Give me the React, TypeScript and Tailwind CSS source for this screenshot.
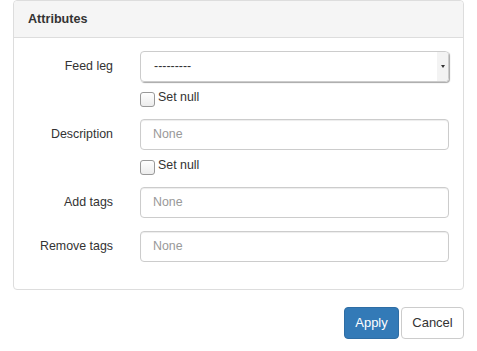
const font = { fontFamily: '"Liberation Sans", Arial, sans-serif' };

const Label = ({ text }: { text: string }) => (
    <div className="w-[85px] shrink-0 text-right text-[12.4px] text-[#333]">{text}</div>
);

const TextInput = () => (
    <div className="flex-1 h-[31px] border border-[#ccc] rounded-[4px] flex items-center px-[12px] text-[12.4px] text-[#999] shadow-[inset_0_1px_1px_rgba(0,0,0,0.075)]">
        None
    </div>
);

const SetNull = () => (
    <div className="flex items-start ml-[112px] mt-[10px]">
        <div className="w-[15px] h-[15px] border border-[#999] rounded-[3px] bg-gradient-to-b from-white to-[#ececec]" />
        <span className="text-[12.4px] text-[#333] ml-[3px] -mt-[3px] leading-[16px]">Set null</span>
    </div>
);

const App = () => {
    return (
        <div className="w-[477px] h-[351px] bg-white" style={font}>
            <div className="mx-[13px] border border-[#ddd] rounded-[4px]">
                <div className="h-[37px] bg-[#f5f5f5] border-b border-[#ddd] rounded-t-[4px] flex items-center px-[14px] text-[12.6px] font-bold text-[#333]">
                    Attributes
                </div>
                <div className="pl-[14px] pr-[14px] pt-[13px] pb-[27px]">
                    <div className="flex items-center gap-[27px]">
                        <Label text="Feed leg" />
                        <div className="flex-1 h-[31px] border border-[#ccc] rounded-[4px] flex items-stretch shadow-[1px_1px_1px_rgba(0,0,0,0.35)]">
                            <div className="flex-1 flex items-center px-[13px] text-[12.4px] text-[#333]">---------</div>
                            <div className="w-[11px] bg-[#f3f3f3] flex items-center justify-center rounded-r-[3px]">
                                <div className="w-0 h-0 border-l-[2.5px] border-r-[2.5px] border-t-[3px] border-l-transparent border-r-transparent border-t-[#333]" />
                            </div>
                        </div>
                    </div>
                    <SetNull />
                    <div className="flex items-center gap-[27px] mt-[12px]">
                        <Label text="Description" />
                        <TextInput />
                    </div>
                    <SetNull />
                    <div className="flex items-center gap-[27px] mt-[12px]">
                        <Label text="Add tags" />
                        <TextInput />
                    </div>
                    <div className="flex items-center gap-[27px] mt-[13px]">
                        <Label text="Remove tags" />
                        <TextInput />
                    </div>
                </div>
            </div>
            <div className="flex justify-end gap-[2px] mr-[13px] mt-[17px]">
                <button className="h-[32px] w-[55px] bg-[#337ab7] border border-[#2e6da4] rounded-[4px] text-white text-[13px]">
                    Apply
                </button>
                <button className="h-[32px] w-[63px] bg-white border border-[#ccc] rounded-[4px] text-[#333] text-[13px]">
                    Cancel
                </button>
            </div>
        </div>
    );
};

export default App;
